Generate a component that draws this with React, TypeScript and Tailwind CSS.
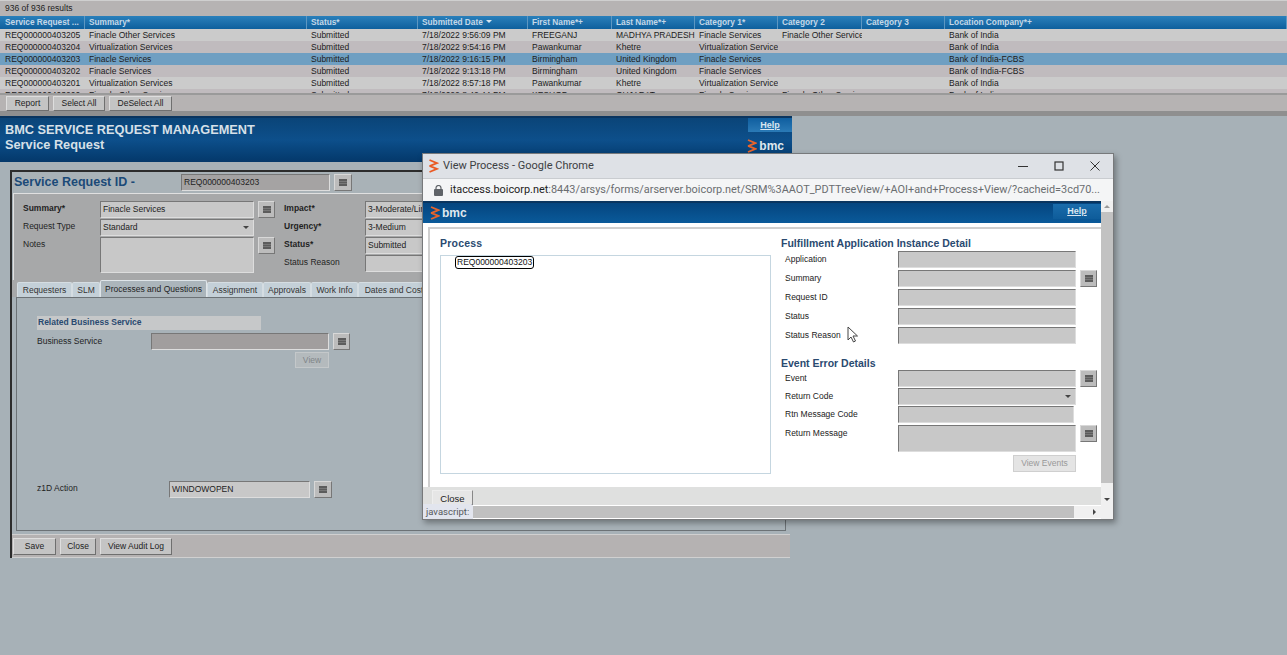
import type { ReactNode } from "react";

const columns = "grid grid-cols-[85px_222px_111px_110px_84px_83px_83px_84px_83px_342px]";

const headers = [
  "Service Request ...",
  "Summary*",
  "Status*",
  "Submitted Date",
  "First Name*+",
  "Last Name*+",
  "Category 1*",
  "Category 2",
  "Category 3",
  "Location Company*+",
];

const rows = [
  ["REQ000000403205", "Finacle Other Services", "Submitted", "7/18/2022 9:56:09 PM", "FREEGANJ", "MADHYA PRADESH", "Finacle Services", "Finacle Other Service", "", "Bank of India"],
  ["REQ000000403204", "Virtualization Services", "Submitted", "7/18/2022 9:54:16 PM", "Pawankumar", "Khetre", "Virtualization Services", "", "", "Bank of India"],
  ["REQ000000403203", "Finacle Services", "Submitted", "7/18/2022 9:16:15 PM", "Birmingham", "United Kingdom", "Finacle Services", "", "", "Bank of India-FCBS"],
  ["REQ000000403202", "Finacle Services", "Submitted", "7/18/2022 9:13:18 PM", "Birmingham", "United Kingdom", "Finacle Services", "", "", "Bank of India-FCBS"],
  ["REQ000000403201", "Virtualization Services", "Submitted", "7/18/2022 8:57:18 PM", "Pawankumar", "Khetre", "Virtualization Services", "", "", "Bank of India"],
  ["REQ000000403200", "Finacle Other Services", "Submitted", "7/18/2022 8:42:44 PM", "KESHOD", "GUJARAT", "Finacle Services", "Finacle Other Service", "", "Bank of India"],
];

const tabs = [
  { label: "Requesters", width: "w-[55px]" },
  { label: "SLM", width: "w-[28px]" },
  { label: "Processes and Questions", width: "w-[107px]", active: true },
  { label: "Assignment", width: "w-[56px]" },
  { label: "Approvals", width: "w-[48px]" },
  { label: "Work Info", width: "w-[47px]" },
  { label: "Dates and Cost", width: "w-[72px]" },
];

function Btn({ children, className = "" }: { children: ReactNode; className?: string }) {
  return (
    <div className={`flex h-[15px] items-center justify-center border border-t-[#dedede] border-l-[#dedede] border-r-[#6f6f6f] border-b-[#6f6f6f] bg-[#c4c4c4] text-[8.5px] text-[#222] ${className}`}>
      {children}
    </div>
  );
}

function MenuBtn({ className = "" }: { className?: string }) {
  return (
    <div className={`flex h-[17px] w-[17px] shrink-0 items-center justify-center border border-t-[#d8d8d8] border-l-[#d8d8d8] border-r-[#777] border-b-[#777] bg-[#bcbcbc] ${className}`}>
      <svg width="8" height="7" viewBox="0 0 8 7">
        <rect width="8" height="7" fill="#5c5c5c" />
        <path d="M0 2.5H8M0 4.5H8" stroke="#8a8a8a" strokeWidth="0.6" />
      </svg>
    </div>
  );
}

function Arrow() {
  return (
    <div className="flex h-full w-[15px] shrink-0 items-center justify-center bg-[#c8c8c8]">
      <div className="h-0 w-0 border-x-[3px] border-t-[3px] border-x-transparent border-t-[#444]" />
    </div>
  );
}

function Field({ children, className = "" }: { children?: ReactNode; className?: string }) {
  return (
    <div className={`flex items-center overflow-hidden border-t border-l border-t-[#777] border-l-[#777] border-r border-b border-r-[#ddd] border-b-[#ddd] bg-[#c8c8c8] pl-[2px] text-[8.5px] whitespace-nowrap text-[#222] ${className}`}>
      {children}
    </div>
  );
}

function BmcLogo({ className = "" }: { className?: string }) {
  return (
    <div className={`flex items-center gap-[2px] ${className}`}>
      <svg width="10" height="14" viewBox="0 0 10 14" fill="none" stroke="#e8642c" strokeWidth="1.8">
        <path d="M1 1L8.5 4.2L1 7.2M1 6.8L8.5 9.8L1 13" />
      </svg>
      <span className="text-[12px] leading-none font-bold text-[#dfe7ee]">bmc</span>
    </div>
  );
}

function Label({ children, bold = false }: { children: ReactNode; bold?: boolean }) {
  return <div className={`text-[8.5px] leading-[14px] text-[#1f1f1f] ${bold ? "font-bold" : ""}`}>{children}</div>;
}

function ResultsPanel() {
  return (
    <div className="h-[116px] bg-[#b6b3b3]">
      <div className="h-[16px] border-t border-[#cfcfcf] pl-[5px] text-[8.5px] leading-[14px] text-[#222]">936 of 936 results</div>
      <div className={`${columns} h-[13px] bg-gradient-to-b from-[#2a80bb] to-[#0d5f9d] text-[8.3px] leading-[13px] font-bold text-[#c4d8e8]`}>
        {headers.map((h, i) => (
          <div key={h} className={`flex items-center gap-[3px] overflow-hidden border-r border-[#5d97c2] whitespace-nowrap ${i === 0 ? "pl-[5px]" : "pl-[4px]"}`}>
            {h}
            {h === "Submitted Date" && <span className="mb-[3px] h-0 w-0 border-x-[3px] border-t-[3px] border-x-transparent border-t-[#d8e6f0]" />}
          </div>
        ))}
      </div>
      <div className="h-[66px] overflow-hidden border-b-2 border-[#9a9a9a]">
        {rows.map((row, i) => (
          <div key={row[0]} className={`${columns} h-[12px] text-[8.5px] leading-[12px] text-[#1c1c1c] ${i === 2 ? "bg-[#6f9fc2]" : i % 2 === 0 ? "bg-[#cbcbcb]" : "bg-[#c0bbbe]"}`}>
            {row.map((cell, j) => (
              <div key={j} className={`overflow-hidden whitespace-nowrap ${j === 0 ? "pl-[5px]" : "pl-[4px]"}`}>{cell}</div>
            ))}
          </div>
        ))}
      </div>
      <div className="flex h-[16px] items-start gap-[4px] pt-[1px] pl-[6px]">
        <Btn className="w-[43px]">Report</Btn>
        <Btn className="w-[52px]">Select All</Btn>
        <Btn className="w-[63px]">DeSelect All</Btn>
      </div>
      <div className="h-[5px] bg-[#8f8f8f]" />
    </div>
  );
}

function ServiceRequestForm() {
  return (
    <div className="w-[792px]">
      <div className="relative h-[46px] border-t-2 border-[#0a355f] bg-gradient-to-b from-[#0a4478] via-[#0d4f8b] to-[#04386a] pt-[5px] pl-[5px] text-[12.75px] leading-[14.5px] font-bold text-[#d7e0e8]">
        <div>BMC SERVICE REQUEST MANAGEMENT</div>
        <div>Service Request</div>
        <div className="absolute top-0 right-0 flex h-[14px] w-[44px] items-center justify-center bg-gradient-to-b from-[#0e5e9f] to-[#2a7ab6] text-[9px] font-bold text-[#d8e6f0] underline">Help</div>
        <BmcLogo className="absolute top-[21px] right-[8px]" />
      </div>

      <div className="mt-[8px] ml-[10px] w-[780px] border-l-2 border-t-2 border-[#2c2c2c]">
        <div className="flex h-[21px] items-center bg-[#a9b2b7]">
          <div className="w-[169px] pl-[2px] text-[12.5px] font-bold text-[#1b4a78]">Service Request ID -</div>
          <Field className="h-[17px] w-[149px] bg-[#a5a3a3]! pl-[2px]">REQ000000403203</Field>
          <MenuBtn className="ml-[4px] w-[18px]" />
        </div>

        <div className="ml-[1px] border-t border-l border-[#e0e0e0] bg-[#a7a8a9] pt-[7px] pl-[9px]">
          <div className="grid h-[79px] grid-cols-[77px_154px_25px_86px_160px] grid-rows-[17px_17px_17px_18px] gap-y-[1px]">
            <Label bold>Summary*</Label>
            <Field className="h-[17px]">Finacle Services</Field>
            <MenuBtn className="ml-[4px]" />
            <div className="pl-[5px]"><Label bold>Impact*</Label></div>
            <Field className="h-[17px]">3-Moderate/Limited</Field>

            <Label>Request Type</Label>
            <Field className="h-[17px] justify-between pr-0">
              Standard
              <Arrow />
            </Field>
            <div />
            <div className="pl-[5px]"><Label bold>Urgency*</Label></div>
            <Field className="h-[17px]">3-Medium</Field>

            <div className="row-span-2"><Label>Notes</Label></div>
            <Field className="row-span-2 h-[36px]" />
            <MenuBtn className="ml-[4px]" />
            <div className="pl-[5px]"><Label bold>Status*</Label></div>
            <Field className="h-[17px]">Submitted</Field>

            <div />
            <div className="pl-[5px]"><Label>Status Reason</Label></div>
            <Field className="h-[17px]" />
          </div>
        </div>

        <div className="bg-[#a7a8a9] pl-[5px]">
          <div className="flex h-[17px] items-end">
            {tabs.map((t) => (
              <div
                key={t.label}
                className={`flex shrink-0 items-center justify-center overflow-hidden rounded-t-[2px] border-x border-t text-[8.5px] whitespace-nowrap ${t.width} ${
                  t.active ? "h-[17px] border-[#dfe5e9] bg-[#abb5bb] text-[#1f1f1f]" : "h-[15px] border-[#d5dde2] bg-[#c4d0d8] text-[#333]"
                }`}
              >
                {t.label}
              </div>
            ))}
          </div>
        </div>

        <div className="ml-[4px] h-[234px] w-[770px] border border-[#6c7276] bg-[#a8b2b8] pt-[18px] pl-[20px]">
          <div className="h-[14px] w-[224px] bg-[#c6c8c9] pl-[1px] text-[8.5px] leading-[12px] font-bold text-[#2a4a70]">Related Business Service</div>
          <div className="mt-[3px] flex items-center">
            <div className="w-[114px] text-[8.5px] text-[#1f1f1f]">Business Service</div>
            <Field className="h-[17px] w-[178px] bg-[#a19e9e]!" />
            <MenuBtn className="ml-[4px]" />
          </div>
          <div className="mt-[2px] ml-[258px] flex h-[16px] w-[34px] items-center justify-center border border-[#c4c8ca] bg-[#b4babd] text-[8.5px] text-[#808588]">View</div>
          <div className="mt-[113px] flex items-center">
            <div className="w-[132px] pb-[2px] text-[8.5px] text-[#1f1f1f]">z1D Action</div>
            <Field className="h-[17px] w-[141px]">WINDOWOPEN</Field>
            <MenuBtn className="ml-[4px] w-[18px]" />
          </div>
        </div>

        <div className="mt-[3px] flex h-[24px] items-center gap-[4px] border-t border-b border-[#d0d0d0] bg-[#b5b2b2] pl-[1px]">
          <Btn className="h-[17px]! w-[43px]">Save</Btn>
          <Btn className="h-[17px]! w-[36px]">Close</Btn>
          <Btn className="h-[17px]! w-[72px]">View Audit Log</Btn>
        </div>
      </div>
    </div>
  );
}

function DetailRow({ label, children, button, height = "h-[17px]" }: { label: string; children?: ReactNode; button?: boolean; height?: string }) {
  return (
    <div className={`flex ${height}`}>
      <div className="w-[117px] pl-[4px] text-[8.5px] leading-[16px] text-[#222]">{label}</div>
      {children ?? <Field className="h-full w-[178px]" />}
      {button && <MenuBtn className="ml-[4px]" />}
    </div>
  );
}

function ProcessWindow() {
  return (
    <div className="absolute top-[153px] left-[422px] flex h-[367px] w-[692px] flex-col border border-[#77797b] bg-white shadow-[2px_3px_6px_rgba(0,0,0,0.35)]">
      <div className="flex h-[24px] shrink-0 items-center bg-[#dee1e6] pl-[5px] font-['Roboto',sans-serif] text-[11px] text-[#3c4043]">
        <svg width="11" height="14" viewBox="0 0 10 14" fill="none" stroke="#ea5a24" strokeWidth="1.8" className="shrink-0">
          <path d="M1 1L8.5 4.2L1 7.2M1 6.8L8.5 9.8L1 13" />
        </svg>
        <span className="ml-[4px]">View Process - Google Chrome</span>
        <div className="ml-auto flex items-center gap-[26px] pr-[13px]">
          <svg width="10" height="10" viewBox="0 0 10 10" stroke="#333" fill="none"><path d="M0 5.5H10" /></svg>
          <svg width="10" height="10" viewBox="0 0 10 10" stroke="#333" fill="none"><rect x="1" y="1" width="8" height="8" strokeWidth="1.2" /></svg>
          <svg width="10" height="10" viewBox="0 0 10 10" stroke="#333" fill="none"><path d="M0.5 0.5L9.5 9.5M9.5 0.5L0.5 9.5" /></svg>
        </div>
      </div>
      <div className="flex h-[23px] shrink-0 items-center overflow-hidden border-t border-[#c9ccd0] bg-[#f4f5f6] pl-[11px] font-['Roboto',sans-serif] text-[10.9px] text-[#6a6d70]">
        <svg width="9" height="11" viewBox="0 0 9 11" className="mr-[7px] shrink-0">
          <rect y="4" width="9" height="7" rx="1" fill="#5f6368" />
          <path d="M2 4.5V3a2.5 2.5 0 0 1 5 0v1.5" stroke="#5f6368" fill="none" strokeWidth="1.2" />
        </svg>
        <span className="whitespace-nowrap">
          <span className="text-[#222]">itaccess.boicorp.net</span>:8443/arsys/forms/arserver.boicorp.net/SRM%3AAOT_PDTTreeView/+AOI+and+Process+View/?cacheid=3cd70...
        </span>
      </div>

      <div className="relative flex min-h-0 flex-1">
        <div className="flex w-[678px] flex-col">
          <div className="relative flex h-[22px] shrink-0 items-center border-t-2 border-[#0a355f] bg-gradient-to-b from-[#05457f] to-[#0a5a9a] pl-[7px]">
            <BmcLogo />
            <div className="absolute top-[1px] right-0 flex h-[15px] w-[48px] items-center justify-center bg-gradient-to-b from-[#1a6cab] to-[#0e5c9a] text-[9px] font-bold text-[#d8e6f0] underline">Help</div>
          </div>
          <div className="mt-[4px] ml-[5px] flex h-[260px] border-t-2 border-l-2 border-[#cfcfcf]">
            <div className="w-[351px] pt-[8px] pl-[10px]">
              <div className="text-[10.5px] leading-[13px] font-bold tracking-[0.02em] text-[#2a4a70]">Process</div>
              <div className="mt-[5px] h-[219px] w-[331px] border border-[#c5d6e0] pl-[14px]">
                <div className="w-fit rounded-[3px] border border-black pr-[1px] pl-[1px] text-[8.5px] leading-[11px] font-medium text-[#111]">REQ000000403203</div>
              </div>
            </div>
            <div className="w-[320px] pt-[8px]">
              <div className="text-[10.5px] leading-[13px] font-bold text-[#2a4a70]">Fulfillment Application Instance Detail</div>
              <div className="mt-[1px] flex flex-col gap-[2px]">
                <DetailRow label="Application" />
                <DetailRow label="Summary" button />
                <DetailRow label="Request ID" />
                <DetailRow label="Status" />
                <DetailRow label="Status Reason" />
              </div>
              <div className="mt-[13px] text-[10.5px] leading-[13px] font-bold text-[#2a4a70]">Event Error Details</div>
              <div className="flex flex-col gap-[1px]">
                <DetailRow label="Event" button />
                <DetailRow label="Return Code">
                  <Field className="h-full w-[178px] justify-end pr-0"><Arrow /></Field>
                </DetailRow>
                <DetailRow label="Rtn Message Code">
                  <Field className="h-full w-[176px] border-r-[#888] border-b-[#888]" />
                </DetailRow>
                <div className="mt-[1px]">
                  <DetailRow label="Return Message" button height="h-[27px]" />
                </div>
              </div>
              <div className="mt-[3px] ml-[232px] flex h-[17px] w-[63px] items-center justify-center border border-[#cfcfcf] bg-[#e4e4e4] text-[8.5px] text-[#999]">View Events</div>
            </div>
          </div>
          <div className="h-[18px] shrink-0 overflow-hidden bg-[#dfe0df] pt-[3px] pl-[9px]">
            <div className="flex h-[15px] w-[41px] items-center justify-center border border-t-[#eee] border-l-[#eee] border-r-[#888] bg-[#e6e6e6] pt-[3px] text-[9.5px] text-[#222]">Close</div>
          </div>
          <div className="mt-[1px] flex h-[12px] shrink-0 items-center bg-[#f0f0f0]">
            <div className="h-full w-[651px] bg-[#c0c0c0]" />
            <div className="ml-[19px] h-0 w-0 border-y-[3px] border-l-[3px] border-y-transparent border-l-[#444]" />
          </div>
        </div>
        <div className="flex w-[12px] flex-col items-center bg-[#f0f0f0]">
          <div className="mt-[4px] h-0 w-0 border-x-[3px] border-b-[3px] border-x-transparent border-b-[#999]" />
          <div className="mt-[4px] h-[271px] w-full bg-[#c2c2c2]" />
          <div className="mt-[15px] h-0 w-0 border-x-[3px] border-t-[3px] border-x-transparent border-t-[#444]" />
        </div>
        <div className="absolute bottom-0 left-0 h-[15px] w-[50px] rounded-tr-[2px] bg-[#e2e5ee] pl-[3px] font-['Roboto',sans-serif] text-[9.5px] leading-[15px] text-[#55585c]">javascript:</div>
      </div>
      <svg width="12" height="17" viewBox="0 0 12 17" className="absolute top-[172px] left-[424px]">
        <path d="M1 1V14L4 11L6.5 16L8.5 15L6 10H10.5Z" fill="#fff" stroke="#444" strokeWidth="1" />
      </svg>
    </div>
  );
}

export default function App() {
  return (
    <div className="relative h-[655px] w-[1287px] overflow-hidden bg-[#a7b1b7] font-['Liberation_Sans',Arial,sans-serif]">
      <ResultsPanel />
      <ServiceRequestForm />
      <ProcessWindow />
    </div>
  );
}
